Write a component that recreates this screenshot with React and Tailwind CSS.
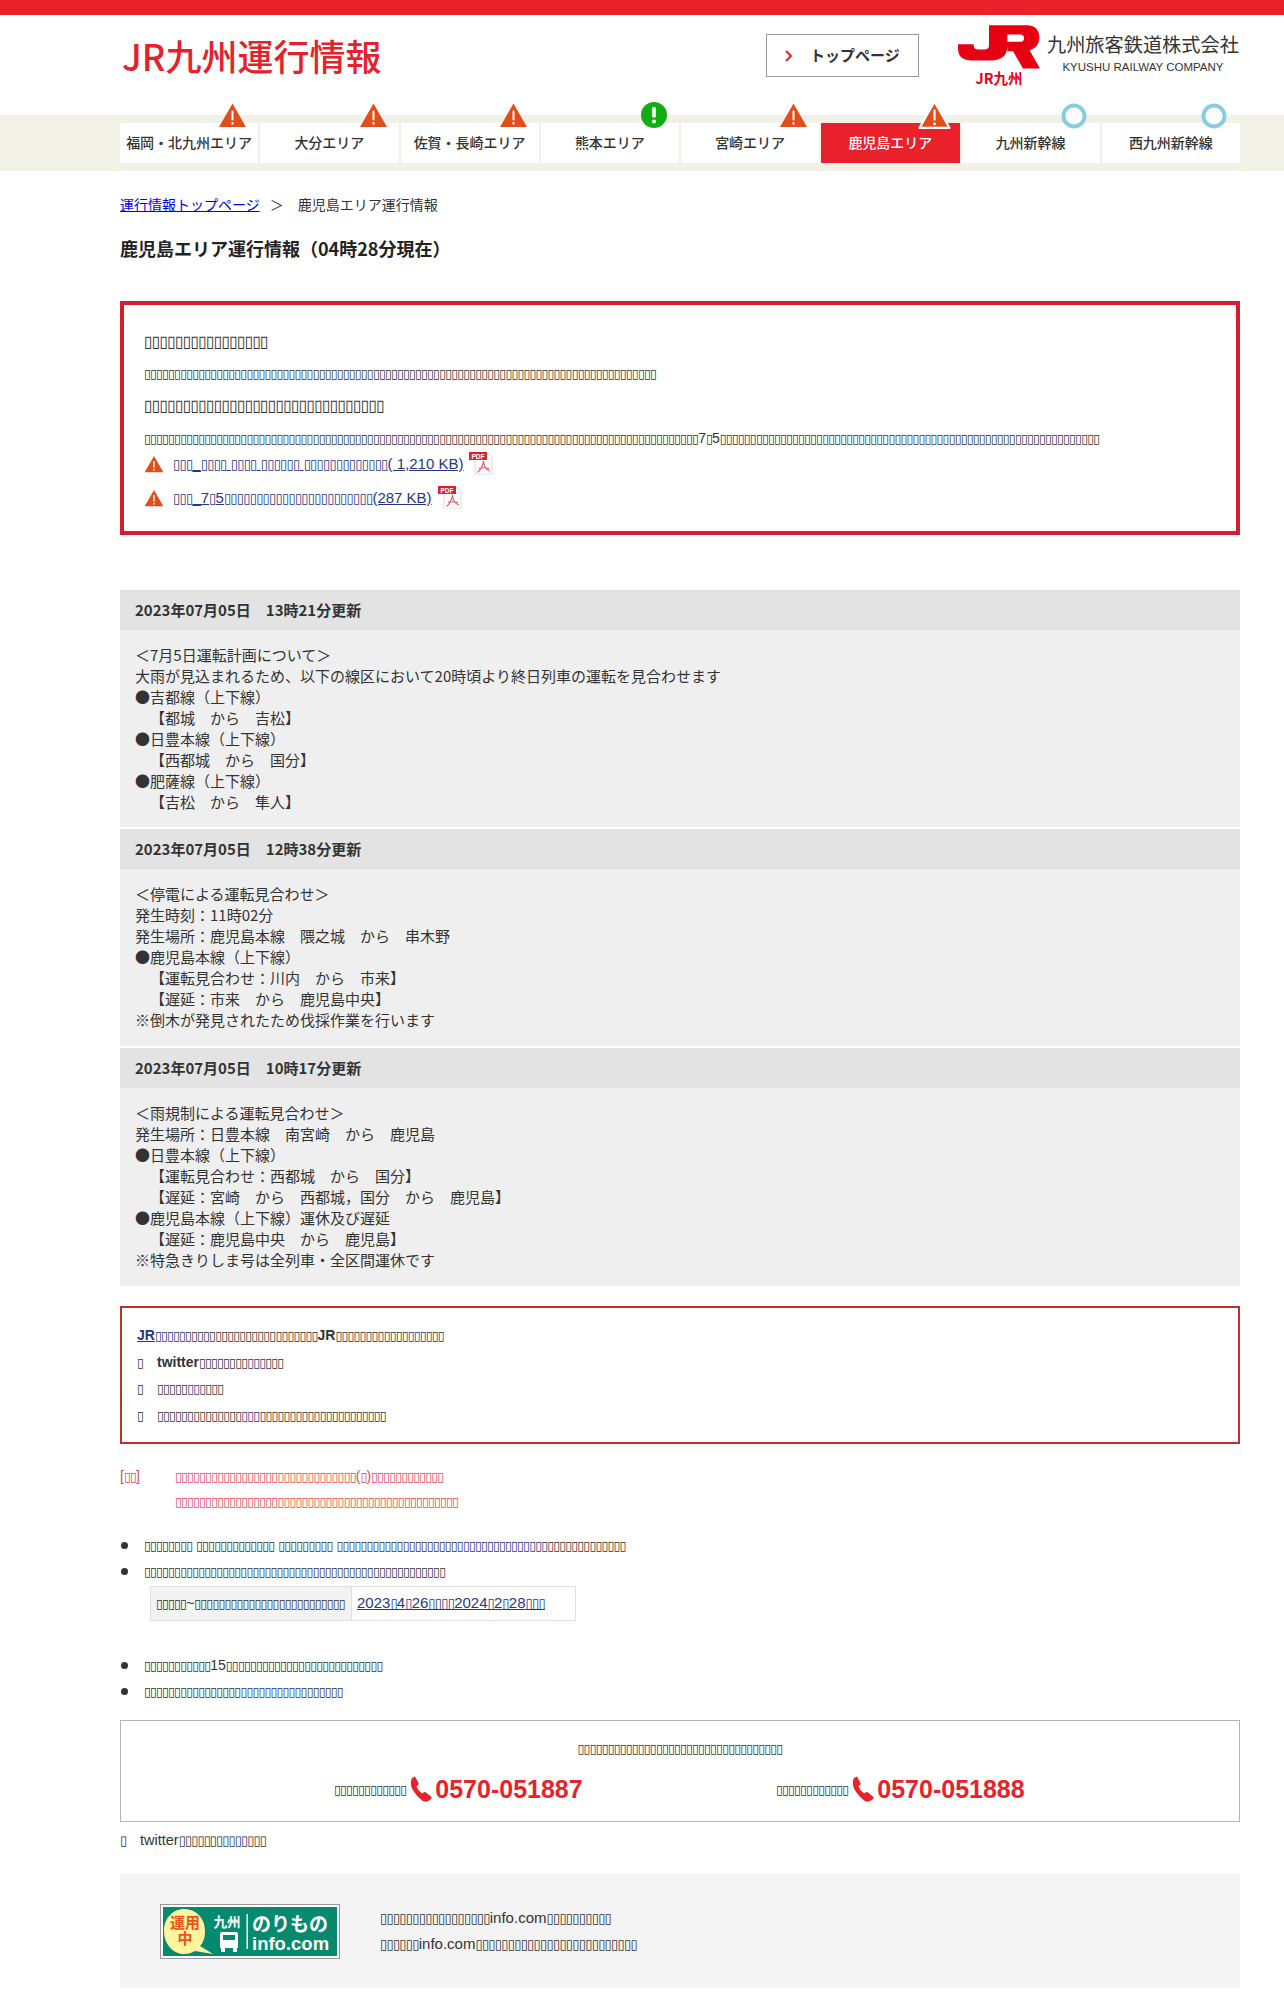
import React from 'react';

// reference shows missing-glyph boxes for much of the copy
const B = (n) => <span className="font-['DejaVu_Sans'] text-[0.9em] leading-[0] tracking-[-0.072em]">{'\u25AF'.repeat(n)}</span>;

const areas = [
  { name: '福岡・北九州エリア', mark: 'warn' },
  { name: '大分エリア', mark: 'warn' },
  { name: '佐賀・長崎エリア', mark: 'warn' },
  { name: '熊本エリア', mark: 'ok' },
  { name: '宮崎エリア', mark: 'warn' },
  { name: '鹿児島エリア', mark: 'warn', active: true },
  { name: '九州新幹線', mark: 'ring' },
  { name: '西九州新幹線', mark: 'ring' },
];

const updates = [
  {
    time: '2023年07月05日　13時21分更新',
    h: 'h-[197px]',
    lines: ['＜7月5日運転計画について＞', '大雨が見込まれるため、以下の線区において20時頃より終日列車の運転を見合わせます', '●吉都線（上下線）', '　【都城　から　吉松】', '●日豊本線（上下線）', '　【西都城　から　国分】', '●肥薩線（上下線）', '　【吉松　から　隼人】'],
  },
  {
    time: '2023年07月05日　12時38分更新',
    h: 'h-[177px]',
    lines: ['＜停電による運転見合わせ＞', '発生時刻：11時02分', '発生場所：鹿児島本線　隈之城　から　串木野', '●鹿児島本線（上下線）', '　【運転見合わせ：川内　から　市来】', '　【遅延：市来　から　鹿児島中央】', '※倒木が発見されたため伐採作業を行います'],
  },
  {
    time: '2023年07月05日　10時17分更新',
    h: 'h-[198px]',
    lines: ['＜雨規制による運転見合わせ＞', '発生場所：日豊本線　南宮崎　から　鹿児島', '●日豊本線（上下線）', '　【運転見合わせ：西都城　から　国分】', '　【遅延：宮崎　から　西都城，国分　から　鹿児島】', '●鹿児島本線（上下線）運休及び遅延', '　【遅延：鹿児島中央　から　鹿児島】', '※特急きりしま号は全列車・全区間運休です'],
  },
];

function WarnIcon({ className, outline }) {
  return (
    <svg viewBox="0 0 30 27" className={className}>
      <path d="M15 1.5 L29 26 H1 Z" fill="#df4f1c" stroke={outline ? '#fff' : 'none'} strokeWidth={outline ? 2 : 0} strokeLinejoin="round" />
      <rect x="14" y="9" width="2" height="10" fill="#fff" />
      <rect x="14" y="21" width="2" height="2.4" fill="#fff" />
    </svg>
  );
}

function OkIcon() {
  return (
    <svg viewBox="0 0 26 26" className="w-[26px] h-[26px]">
      <circle cx="13" cy="13" r="13" fill="#12ad12" />
      <rect x="11.2" y="5" width="3.6" height="10.5" rx="1" fill="#fff" />
      <circle cx="13" cy="19.5" r="2" fill="#fff" />
    </svg>
  );
}

function RingIcon() {
  return (
    <svg viewBox="0 0 26 26" className="w-[26px] h-[26px]">
      <circle cx="13" cy="13" r="10.5" fill="#fff" stroke="#86cddd" strokeWidth="4" />
    </svg>
  );
}

function PdfIcon() {
  return (
    <svg viewBox="0 0 24 24" className="w-[24px] h-[24px] ml-[6px] -mt-[2px]">
      <path d="M6 3 H20 L23 6 V24 H6 Z" fill="#fbfbfb" stroke="#dddddd" strokeWidth="1" />
      <rect x="0" y="1" width="18" height="8" fill="#d8232f" />
      <text x="9" y="7.6" textAnchor="middle" fontSize="6.5" fontWeight="700" fill="#fff" fontFamily="Liberation Sans">PDF</text>
      <path d="M14.5 10 C14 15 11 20 8.5 21.5 M14.5 10 C15 15 17.5 19 21 20 M10 17.5 C13 16.5 16 16.5 20 17.5" stroke="#e0606a" strokeWidth="1.1" fill="none" />
    </svg>
  );
}

function PhoneIcon() {
  return (
    <svg viewBox="0 0 22 26" className="w-[22px] h-[26px] ml-[4px] mr-[3px]">
      <path fill="#e8212a" d="M5 0.5 L8.5 7 Q9 8.5 7.5 9.5 L6.5 10.5 Q7.5 14 12 17.5 L13.5 16.5 Q15 15.5 16 16.5 L21.5 21 Q22 22.5 20.5 23.5 L18 25 Q16 26.5 13 25 Q6 20 2 12.5 Q0 7 1.5 3 Q2.5 1 5 0.5 Z" />
    </svg>
  );
}

function JrLogo() {
  return (
    <svg viewBox="57 30 246 131" className="w-[82px] h-[44px]">
      <path fill="#e60012" d="M150 30 H262 Q301 30 301 68 Q301 96 272 106 L303 160 H252 L222 108 H205 V92 Q205 136 155 136 H100 Q57 136 57 100 V87 H104 V92 Q104 103 118 103 H136 Q150 103 150 90 Z M205 58 V80 H243 Q255 80 255 69 Q255 58 243 58 Z" />
    </svg>
  );
}

function NorimonoBanner() {
  return (
    <svg viewBox="0 0 180 55" className="w-[180px] h-[55px]">
      <rect x="0.5" y="0.5" width="179" height="54" fill="#fff" stroke="#999" />
      <rect x="3" y="3" width="174" height="49" fill="#058a70" />
      <path d="M4 27 C4 14 13 5 24 5 C36 5 45 14 45 27 C45 34 43 39 40 42 L53 50 L35 47 C32 49 28 50 24 50 C13 50 4 40 4 27 Z" fill="#fef59c" />
      <text x="25" y="24" textAnchor="middle" fontSize="15" fontWeight="700" fill="#f0501e" fontFamily="Noto Sans CJK JP">運用</text>
      <text x="25" y="40" textAnchor="middle" fontSize="15" fontWeight="700" fill="#f0501e" fontFamily="Noto Sans CJK JP">中</text>
      <text x="67" y="23" textAnchor="middle" fontSize="13.5" fontWeight="700" fill="#fff" fontFamily="Noto Sans CJK JP">九州</text>
      <path d="M62 28 H76 Q78 28 78 30 V44 H60 V30 Q60 28 62 28 Z M63 31 V36 H75 V31 Z M61 44 H65 V48 H61 Z M73 44 H77 V48 H73 Z" fill="#fff" fillRule="evenodd" />
      <rect x="86.5" y="10" width="1.5" height="35" fill="#fff" />
      <text x="92" y="27" fontSize="19" fontWeight="700" fill="#fff" fontFamily="Noto Sans CJK JP">のりもの</text>
      <text x="92" y="46" fontSize="18.5" fontWeight="700" fill="#fff" fontFamily="Liberation Sans">info.com</text>
    </svg>
  );
}

function Lnk({ children, className = '' }) {
  return <a className={`text-[#25387f] underline ${className}`}>{children}</a>;
}

function Li({ children }) {
  return (
    <li className="flex items-center">
      <span className="w-[7px] h-[7px] rounded-full bg-[#333] ml-[1px] mr-[16px]" />
      <span>{children}</span>
    </li>
  );
}

export default function App() {
  return (
    <div className="bg-white text-[#333] min-h-[2009px] font-['Liberation_Sans','Noto_Sans_CJK_JP',sans-serif]">
      <div className="h-[15px] bg-[#e8212a]" />

      <header className="h-[100px] pl-[122px] flex items-start">
        <div className="w-[644px] mt-[15px] font-['Noto_Sans_CJK_JP'] font-medium text-[36px] leading-[50px] text-[#e3222e]">JR九州運行情報</div>
        <a className="w-[153px] h-[43px] mt-[19px] border border-[#999] flex items-center pl-[18px] gap-[17px] font-['Noto_Sans_CJK_JP'] font-bold text-[15px] text-[#333]">
          <svg viewBox="0 0 8 12" className="w-[8px] h-[12px]"><path d="M1 1 L6 6 L1 11" stroke="#e8212a" strokeWidth="2" fill="none" /></svg>
          トップページ
        </a>
        <div className="ml-[39px] mt-[10px] w-[82px] flex flex-col items-center">
          <JrLogo />
          <span className="font-['Noto_Sans_CJK_JP'] font-bold text-[#e60012] text-[14.5px] leading-[14px] mt-[2px]">JR九州</span>
        </div>
        <div className="ml-[7px] mt-[16px] flex flex-col items-center font-['Noto_Sans_CJK_JP'] text-[#333]">
          <span className="text-[19.2px] leading-[26px] whitespace-nowrap">九州旅客鉄道株式会社</span>
          <span className="text-[11.5px] leading-[14px] mt-[3px] font-['Liberation_Sans'] whitespace-nowrap">KYUSHU RAILWAY COMPANY</span>
        </div>
      </header>

      <nav className="bg-[#f1f1e7] h-[56px] pt-[8px] pl-[120px]">
        <div className="w-[1120px] grid grid-cols-8 gap-[2px]">
          {areas.map((a) => (
            <div key={a.name} className={`relative h-[40px] pb-[2px] flex items-center justify-center font-['Noto_Sans_CJK_JP'] font-medium text-[14px] ${a.active ? 'bg-[#e8212a] text-white' : 'bg-white text-[#333]'}`}>
              {a.name}
              {a.mark === 'warn' && !a.active && <WarnIcon className="absolute right-[11px] -top-[21px] w-[29px] h-[26px]" />}
              {a.active && <WarnIcon className="absolute right-[9px] -top-[23px] w-[33px] h-[29px]" outline />}
              {a.mark === 'ok' && <div className="absolute right-[12px] -top-[21px]"><OkIcon /></div>}
              {a.mark === 'ring' && <div className="absolute right-[13px] -top-[20px]"><RingIcon /></div>}
            </div>
          ))}
        </div>
      </nav>

      <main className="w-[1120px] ml-[120px]">
        <div className="mt-[23px] flex items-center text-[14px] leading-[20px] font-['Noto_Sans_CJK_JP']">
          <a className="text-[#0000ee] underline">運行情報トップページ</a>
          <span className="ml-[10px] mr-[14px]">＞</span>
          <span>鹿児島エリア運行情報</span>
        </div>
        <h1 className="mt-[21px] font-['Noto_Sans_CJK_JP'] font-bold text-[18px] leading-[26px] text-[#222]">鹿児島エリア運行情報（04時28分現在）</h1>

        <section className="mt-[40px] h-[234px] border-4 border-[#d11f2f] px-[20px] pt-[24px]">
          <p className="text-[18px] leading-[24px]">{B(16)}</p>
          <p className="text-[14px] leading-[18px] mt-[11px]">{B(85)}</p>
          <p className="text-[18px] leading-[24px] mt-[11px]">{B(31)}</p>
          <p className="text-[14px] leading-[18px] mt-[12px] whitespace-nowrap">{B(92)}7{B(1)}5{B(63)}</p>
          <p className="flex items-center text-[15px] leading-[20px] mt-[6px]">
            <WarnIcon className="w-[20px] h-[18px] mr-[9px]" />
            <Lnk>{B(3)}_{B(4)} {B(4)} {B(6)} {B(13)}( 1,210 KB)</Lnk>
            <PdfIcon />
          </p>
          <p className="flex items-center text-[15px] leading-[20px] mt-[12px]">
            <WarnIcon className="w-[20px] h-[18px] mr-[9px]" />
            <Lnk>{B(3)}_7{B(1)}5{B(23)}(287 KB)</Lnk>
            <PdfIcon />
          </p>
        </section>

        <section className="mt-[55px] flex flex-col gap-[2px] font-['Noto_Sans_CJK_JP'] [text-spacing-trim:space-all]">
          {updates.map((u) => (
            <div key={u.time}>
              <h2 className="h-[40px] bg-[#e3e3e3] pl-[15px] flex items-center font-bold text-[15px] text-[#333]">{u.time}</h2>
              <div className={`${u.h} bg-[#efefef] pl-[15px] pt-[14px] text-[15px] leading-[21px]`}>
                {u.lines.map((l) => <div key={l}>{l}</div>)}
              </div>
            </div>
          ))}
        </section>

        <section className="mt-[20px] h-[138px] border-2 border-[#b8312f] pl-[15px] pt-[14px] text-[14px] leading-[26.5px]">
          <p><Lnk className="font-bold">JR{B(5)}</Lnk>{B(22)}<span className="font-bold">JR</span>{B(12)}<Lnk>{B(3)}</Lnk>{B(3)}</p>
          <p><span className="inline-block w-[20px]">{B(1)}</span><span className="font-bold">twitter</span>{B(8)}<Lnk>{B(3)}</Lnk>{B(3)}</p>
          <p><span className="inline-block w-[20px]">{B(1)}</span>{B(5)}<Lnk>{B(3)}</Lnk>{B(3)}</p>
          <p><span className="inline-block w-[20px]">{B(1)}</span>{B(14)}<Lnk>{B(3)}</Lnk>{B(21)}</p>
        </section>

        <section className="mt-[20px] flex text-[14px] leading-[25px] text-[#e04a58]">
          <span className="w-[55px] shrink-0">[{B(2)}]</span>
          <div>
            <p>{B(30)}({B(1)}){B(12)}</p>
            <p>{B(47)}</p>
          </div>
        </section>

        <ul className="mt-[18px] text-[14px] leading-[26px]">
          <Li>{B(8)} {B(13)} {B(9)} {B(20)}<Lnk>{B(15)}</Lnk>{B(13)}</Li>
          <Li>{B(50)}</Li>
        </ul>
        <table className="ml-[30px] mt-[2px] border-collapse text-[14px]">
          <tbody>
            <tr className="h-[34px]">
              <td className="w-[201px] border border-[#e0e0e0] bg-[#f3f3f3] pl-[5px]">{B(5)}~{B(25)}</td>
              <td className="w-[224px] border border-[#e0e0e0] pl-[5px] text-[15px]"><Lnk>2023{B(1)}4{B(1)}26{B(4)}2024{B(1)}2{B(1)}28{B(3)}</Lnk></td>
            </tr>
          </tbody>
        </table>
        <ul className="mt-[31px] text-[14px] leading-[26px]">
          <Li>{B(11)}15{B(26)}</Li>
          <Li>{B(16)}<Lnk>{B(10)}</Lnk>{B(7)}</Li>
        </ul>

        <section className="mt-[16px] h-[102px] border border-[#b5b5b5] pt-[17px] text-[14px] leading-[20px]">
          <p className="text-center">{B(34)}</p>
          <div className="mt-[16px] flex pl-[213px]">
            <div className="w-[442px] flex items-center">
              <span>{B(12)}</span>
              <PhoneIcon />
              <span className="text-[25px] leading-[30px] font-bold text-[#e8212a]">0570-051887</span>
            </div>
            <div className="flex items-center">
              <span>{B(12)}</span>
              <PhoneIcon />
              <span className="text-[25px] leading-[30px] font-bold text-[#e8212a]">0570-051888</span>
            </div>
          </div>
        </section>

        <p className="mt-[8px] text-[14.5px] leading-[20px]"><span className="inline-block w-[20px]">{B(1)}</span>twitter{B(8)}<Lnk>{B(3)}</Lnk>{B(3)}</p>

        <section className="mt-[24px] h-[114px] bg-[#f4f4f4] pl-[40px] flex items-center">
          <NorimonoBanner />
          <div className="ml-[40px] text-[15px] leading-[26px]">
            <p>{B(17)}info.com{B(10)}</p>
            <p>{B(6)}info.com{B(25)}</p>
          </div>
        </section>
      </main>
    </div>
  );
}
